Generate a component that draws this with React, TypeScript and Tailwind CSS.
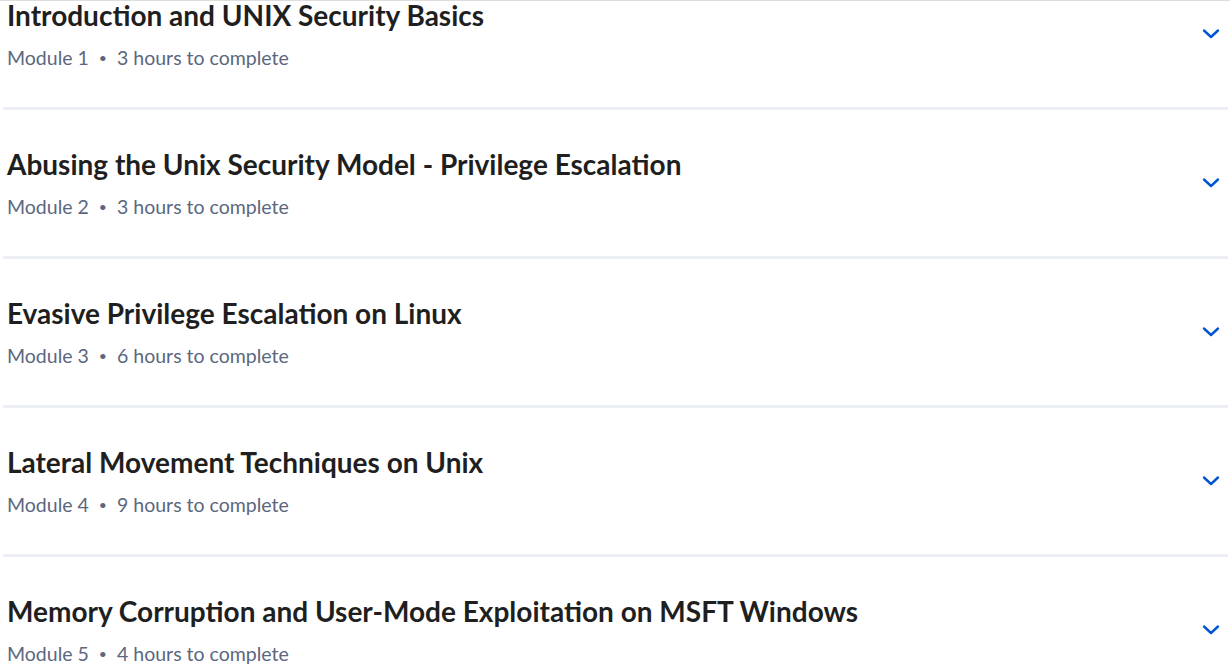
import React from 'react';

const modules = [
    { title: 'Introduction and UNIX Security Basics', hours: 3 },
    { title: 'Abusing the Unix Security Model - Privilege Escalation', hours: 3 },
    { title: 'Evasive Privilege Escalation on Linux', hours: 6 },
    { title: 'Lateral Movement Techniques on Unix', hours: 9 },
    { title: 'Memory Corruption and User-Mode Exploitation on MSFT Windows', hours: 4 },
];

function Chevron() {
    return (
        <svg width="18" height="12" viewBox="0 0 18 12" fill="none" className="shrink-0">
            <path d="M2 2.5 L9 9 L16 2.5" stroke="#0056d2" strokeWidth="2.4" strokeLinecap="round" strokeLinejoin="round" />
        </svg>
    );
}

export default function App() {
    return (
        <main className="h-[672px] w-[1230px] overflow-hidden bg-white border-t border-[#dddddd] font-['Lato',sans-serif]">
            <ul className="-mt-[40px]">
                {modules.map((m, i) => (
                    <li
                        key={i}
                        className="h-[149px] ml-[3px] mr-[2px] border-b-[3px] border-[#eceef5] flex items-center justify-between pl-[4px] pr-[8px]"
                    >
                        <div className="flex flex-col">
                            <h3 className="text-[28px] leading-[36px] font-bold text-[#1f1f1f]">{m.title}</h3>
                            <p className="mt-[11px] text-[19.5px] leading-[28px] text-[#5b6780] flex items-center">
                                <span>Module {i + 1}</span>
                                <span className="mx-[10px] text-[14px]">•</span>
                                <span>{m.hours} hours to complete</span>
                            </p>
                        </div>
                        <Chevron />
                    </li>
                ))}
            </ul>
        </main>
    );
}
